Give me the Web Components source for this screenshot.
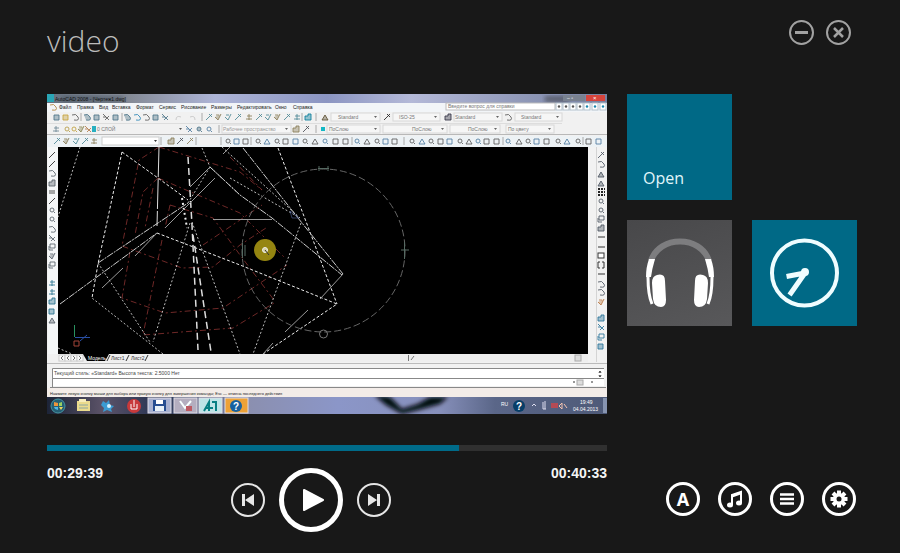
<!DOCTYPE html>
<html lang="en">
<head>
<meta charset="utf-8">
<meta name="viewport" content="width=device-width, initial-scale=1">
<title>video</title>
<style>
html, body { margin: 0; background: #181818; }
body { font-family: "Open Sans", "Noto Sans", sans-serif; color: #fff; }
</style>
</head>
<body>
<media-app></media-app>
<script>
const define = (name, html, setup) => {
  const template = document.createElement('template');
  template.innerHTML = html;
  customElements.define(name, class extends HTMLElement {
    constructor() {
      super();
      this.attachShadow({ mode: 'open' }).append(template.content.cloneNode(true));
    }
    connectedCallback() { if (setup) setup(this, this.shadowRoot); }
  });
};

/* Round outlined button; size and stroke come from custom properties. */
define('round-button', `
<style>
:host { display: block; flex: none; }
button { display: grid; place-items: center; box-sizing: border-box; margin: 0; padding: 0;
  width: var(--size, 34px); height: var(--size, 34px); border: var(--ring, 3px) solid currentColor;
  border-radius: 50%; background: none; color: inherit; font: bold 18px/18px "Noto Sans", sans-serif; cursor: pointer; }
::slotted(svg) { display: block; }
</style>
<button type="button"><slot></slot></button>`, (el, root) => {
  root.querySelector('button').setAttribute('aria-label', el.getAttribute('label'));
});

define('app-header', `
<style>
:host { display: flex; justify-content: space-between; align-items: flex-start; padding: 0 6px 0 0; }
h1 { margin: 0; font-size: 30px; line-height: 42px; font-weight: 300; color: #bcbcbc; }
div { display: flex; gap: 12px; color: #a2a2a2; --size: 25px; --ring: 2px; }
</style>
<h1>video</h1>
<div>
<round-button label="Minimize"><svg width="13" height="13"><path d="M0 6.500H13" stroke="currentColor" stroke-width="3"/></svg></round-button>
<round-button label="Close"><svg width="13" height="13"><path d="M2 2L11 11M11 2L2 11" stroke="currentColor" stroke-width="2.500"/></svg></round-button>
</div>`);

define('app-tile', `
<style>
:host { display: block; }
button { display: flex; width: 100%; height: 106px; margin: 0; border: 0; padding: 0 16px 10px; align-items: flex-end;
  background: #006986; color: #e0f6fb; font: 16px/24px "Open Sans", sans-serif; cursor: pointer; }
:host([icon]) button { padding: 0; align-items: center; justify-content: center; }
:host([tone="grey"]) button { background: linear-gradient(160deg, #48484a, #58585a); }
::slotted(svg) { display: block; }
</style>
<button type="button"><slot></slot></button>`, (el, root) => {
  if (el.hasAttribute('label')) root.querySelector('button').setAttribute('aria-label', el.getAttribute('label'));
});

/* The frame of the video: a CAD program on a desktop. */
define('video-frame', `
<style>
:host { display: block; }
svg { display: block; width: 100%; height: auto; font-family: "Liberation Sans", sans-serif; }
</style>
<svg viewBox="47 94 560 320" role="img" aria-label="Video frame"></svg>`, (el, root) => {
  const out = [];
  const rect = (x, y, w, h, f, more = '') => out.push(`<rect x="${x}" y="${y}" width="${w}" height="${h}" fill="${f}" ${more}/>`);
  const line = (d, c, w = 1, dash = '', o = 1) => out.push(`<path d="${d}" fill="none" stroke="${c}" stroke-width="${w}" stroke-dasharray="${dash}" opacity="${o}"/>`);
  const text = (x, y, t, c = '#333', size = 5, more = '') => out.push(`<text x="${x}" y="${y}" fill="${c}" font-size="${size}" ${more}>${t}</text>`);

  const shapes = [
    'M-3 -2H2V3H-3Z', 'M-3 3L3 -3M0 -3L3 0', 'M-2 0A2 2 0 1 0 2 0A2 2 0 1 0 -2 0M2 2L3 3', 'M-3 3V-1H0V-3H3V3Z',
    'M-3 -3L3 3M-1 3L3 -1M-3 0H0', 'M-3 2H3M-2 -1H3M0 -3V3', 'M-3 3L0 -2L3 3Z', 'M-2 -3H3V1H-2ZM-3 -1V3H1',
    'M-3 -2Q1 -4 3 0T-1 3', 'M-3 0L0 3L3 -3M-2 -2H1'];
  const colours = ['#4b7488', '#4a4d55', '#4f7ba0', '#8a7c58', '#5a5a5a', '#4b8794'];
  const icon = (x, y, i, c = colours[(i * 5) % 6]) =>
    out.push(`<path transform="translate(${x} ${y})" d="${shapes[i % 10]}" fill="${i % 3 ? 'none' : c}" fill-opacity=".4" stroke="${c}" stroke-opacity=".85"/>`);
  const icons = (xs, y, shift = 0) => xs.forEach((x, i) => icon(x, y, (i * 7 + i * i + shift) % 30));
  const seps = (xs, y) => xs.forEach(x => line(`M${x} ${y - 4}V${y + 4}`, '#aaa'));
  const field = (x, y, w, t, tx, c = '#777') => {
    rect(x, y - 4, w, 8, '#f6f6f6', 'stroke="#d8d8d8" stroke-width="1"');
    text(tx, y + 2, t, c);
    out.push(`<path d="M${x + w - 6} ${y - 1}h3l-1.500 2z" fill="#666"/>`);
  };

  out.push(`<defs>
    <linearGradient id="cap"><stop offset="0" stop-color="#65707e"/><stop offset=".15" stop-color="#858b97"/><stop offset=".3" stop-color="#adb4d6"/><stop offset=".5" stop-color="#8b95c2"/><stop offset=".65" stop-color="#b4b9d8"/><stop offset="1" stop-color="#7580a0"/></linearGradient>
    <linearGradient id="bar"><stop offset="0" stop-color="#1c2438"/><stop offset=".1" stop-color="#5c5368"/><stop offset=".2" stop-color="#263252"/><stop offset=".35" stop-color="#8b8fae"/><stop offset=".52" stop-color="#8b96c8"/><stop offset=".7" stop-color="#8790bb"/><stop offset=".8" stop-color="#5a6688"/><stop offset="1" stop-color="#4e5a78"/></linearGradient>
    <clipPath id="sheet"><rect x="58" y="147" width="530" height="207"/></clipPath>
    <clipPath id="strip"><rect x="47" y="397" width="560" height="17"/></clipPath>
    <filter id="soft"><feGaussianBlur stdDeviation="2"/></filter></defs>`);
  rect(47, 94, 560, 320, '#f1f1f1');
  /* caption and menu */
  rect(47, 94, 560, 9, 'url(#cap)');
  rect(62, 96, 62, 6, '#263442', 'opacity=".35" filter="url(#soft)"');
  rect(545, 96, 24, 6, '#333', 'opacity=".5" filter="url(#soft)"');
  rect(47, 94, 7, 8, '#2aa5b5');
  text(55, 101, 'AutoCAD 2008 - [Чертеж1.dwg]', '#111');
  rect(563, 95, 22, 6, '#79818f');
  rect(586, 95, 19, 6, '#d7443c');
  text(567, 100, '–  ▫', '#fff'); text(593, 100, '×', '#fff', 6);
  rect(47, 103, 560, 9, '#f2f5f8');
  icon(53, 107, 8, '#b2843b');
  [[59, 'Файл'], [77, 'Правка'], [99, 'Вид'], [112, 'Вставка'], [136, 'Формат'], [159, 'Сервис'], [181, 'Рисование'], [211, 'Размеры'], [237, 'Редактировать'], [275, 'Окно'], [293, 'Справка']]
    .forEach(([x, t]) => text(x, 109, t, '#222'));
  rect(446, 103, 109, 7, '#fff', 'stroke="#bbb"');
  text(448, 108, 'Введите вопрос для справки', '#777');
  [559, 566, 573, 580, 587, 595, 603].forEach((x, i) => { rect(x - 3, 103, 6, 7, '#fff', 'stroke="#b4c2cb" stroke-width="1"'); out.push(`<circle cx="${x}" cy="106.500" r="1.200" fill="${i > 3 ? '#1985ad' : '#555'}"/>`); });
  /* toolbars */
  icons([57, 75, 87, 97, 106, 116, 127, 146, 156, 165], 117);
  icon(66, 117, 0, '#c5a23c'); icon(137, 117, 8, '#2b86b6');
  line('M176 120Q176 115 181 117M190 117Q195 115 195 120', '#ccc');
  icons([209, 218, 228, 238, 249, 259, 268, 277, 287, 297], 117, 1);
  icon(308, 117, 3, '#087d9b'); icon(325, 117, 6, '#5d5032');
  seps([81, 122, 202, 302, 316], 117);
  field(331, 117, 49, 'Standard', 338); icon(387, 117, 1, '#222'); field(393, 117, 47, 'ISO-25', 399);
  icon(448, 117, 3, '#334'); field(454, 117, 48, 'Standard', 455); icon(508, 117, 8); field(515, 117, 47, 'Standard', 521);
  line('M47 123.500H562', '#ddd');
  icon(56, 129, 5, '#6d8794'); icon(67, 129, 2, '#b59b45'); icon(74, 129, 2, '#c0a03c'); icon(81, 129, 9, '#8a8450'); icon(88, 129, 4, '#b37b4b');
  rect(92, 126, 4, 6, '#28afc0'); text(97, 131, '0 СЛОЙ', '#777');
  out.push('<path d="M179 128h3l-1.500 2z" fill="#555"/>');
  icons([189, 199, 209], 129, 4); seps([219, 316], 129);
  field(222, 129, 69, 'Рабочее пространство', 223, '#999'); icons([296, 306], 129, 3);
  rect(321, 127, 4, 4, '#13b8c5'); field(327, 129, 53, 'ПоСлою', 329); field(383, 129, 64, 'ПоСлою', 412);
  field(450, 129, 50, 'ПоСлою', 468); field(506, 129, 48, 'По цвету', 508);
  line('M47 134.500H607', '#b8b8b8');
  rect(47, 136, 560, 11, '#edf2f5');
  icons([57, 66, 76, 85, 94], 141, 1); rect(102, 137, 57, 8, '#fff', 'stroke="#ccc"');
  out.push('<path d="M154 140h3l-1.500 2z" fill="#333"/>');
  icons([171, 180, 190], 141, 3); rect(199, 137, 20, 8, '#f2f2f2');
  icons([228, 237, 246, 258, 267, 277, 286, 296, 305, 315, 325, 336, 346, 357, 367, 377, 386, 395, 412, 422, 431, 441, 450, 460, 469, 478, 487, 497, 508, 519, 528, 537, 547, 558, 567, 578, 589, 599], 141, 2);
  seps([161, 196, 221, 251, 352, 404, 503, 583], 141);
  /* side bars */
  rect(48, 147, 10, 207, '#f5f7f8'); rect(588, 147, 19, 215, '#f2f2f2'); line('M596.500 147V362', '#d4d4d4');
  [155, 164, 173, 183, 192, 201, 210, 219, 229, 238, 247, 256, 265, 283, 292, 301, 311, 320].forEach((y, i) => {
    if (i < 2 || i === 5) line(`M49 ${y + 3}L55 ${y - 3}`, '#444');
    else if (i === 4) line(`M49 ${y - 1}h6M49 ${y + 1}h6`, '#555');
    else icon(52, y, [0, 0, 8, 3, 0, 1, 2, 2, 8, 4, 7, 9, 7, 5, 5, 3, 0, 6][i], i > 12 && i < 17 ? '#27718d' : '#576068');
  });
  [155, 164, 174, 183, 192, 201, 210, 219, 228, 237, 247, 256, 265, 274, 284, 292, 302, 318, 327, 337, 346].forEach((y, i) => {
    if ([9, 10, 13].includes(i)) line(`M598 ${y}h7`, '#333');
    else if (i === 4) line(`M598 ${y - 3}h7M598 ${y}h7M598 ${y + 3}h7`, '#222', 2, '2 1');
    else if (i === 11) rect(598, y - 3, 6, 5, '#fff', 'stroke="#333"');
    else if (i === 12) line(`M600 ${y - 3}h-2v6h2M602 ${y - 3}h2v6h-2`, '#333');
    else icon(601, y, [1, 8, 6, 6, 5, 2, 2, 7, 3, 0, 0, 0, 3, 0, 8, 8, 9, 3, 4, 7, 0][i], i > 16 ? '#287399' : i === 16 ? '#b97742' : '#4c5560');
  });
  /* drawing sheet */
  out.push('<g clip-path="url(#sheet)">');
  rect(58, 147, 530, 207, '#000');
  const red = ['M159 147L240 172L262 190', 'M159 147L139 160L122 246L182 268L213 267L240 245L266 228', 'M158 178L240 213L285 258', 'M158 178L143 192L135 235', 'M153 188L145 228', 'M162 240L143 335L233 328L274 303', 'M130 252L122 298L165 313L223 308L287 265', 'M170 205L213 218L240 255L274 300', 'M203 245L240 220L262 205', 'M230 157L262 190', 'M170 205L165 228'];
  red.forEach(d => line(d, '#933634', 1, '6 3 2 3', .75));
  ['M80 147L58 217', 'M163 354L92 298', 'M98 263L150 342', 'M188 203L210 167L240 195', 'M202 148L210 167', 'M190 223L153 342', 'M192 222L240 354', 'M222 147L300 218', 'M230 178L300 218', 'M301 223L253 354', 'M58 348L72 354'].forEach(d => line(d, '#bbb', 1, '2 2'));
  ['M122 152L98 264L92 298', 'M122 152L158 178L188 200', 'M157 233L240 265L337 304L263 354', 'M278 148L310 232L337 304'].forEach(d => line(d, '#eee', 1, '3 2'));
  ['M60 304L157 233', 'M98 263L188 203', 'M243 148L298 218L343 274', 'M210 167L240 195L272 218L342 275'].forEach(d => line(d, '#ccc', 1, '7 1 2 1'));
  line('M188 157L192 225L198 350M193 235L211 352', '#ddd', 1.5, '7 4'); line('M182 198L187 228', '#eee', 2, '2 3');
  line('M159 147L157 226', '#ddd', 1, '30 2');
  line('M102 288L123 268M135 256L157 233M165 228L215 178M190 187L210 167M223 154L230 147M343 274L320 299M308 310L285 332M213 219.500H272M263 354L273 343', '#999');
  out.push('<circle cx="323.500" cy="250.500" r="81.500" fill="none" stroke="#666" stroke-dasharray="7 3"/>');
  line('M318 168.500h11M319 166v5M328 166v5M242.500 243v15M245 245v11M404.500 242v17M401 250h8', '#566a62');
  out.push('<circle cx="323.500" cy="334" r="4" fill="none" stroke="#777"/>');
  out.push('<circle cx="265" cy="250" r="11" fill="#958511"/><circle cx="265" cy="250" r="2.500" fill="#d8d2a2" stroke="#eee"/>');
  line('M265 250l4 5', '#333');
  line('M290 211l9 7h-7z', '#50629b', 1, '', .6); line('M74.500 337V325', '#29915f'); line('M75 337.500H90M80 341l7-6', '#294fa5'); line('M74 341h5v5h-5z', '#a34438');
  out.push('</g>');
  /* layout tabs and command line */
  rect(58, 354, 530, 8, '#eee');
  [62, 68, 74, 80].forEach((x, i) => { rect(x - 3, 355, 6, 6, '#fafafa', 'stroke="#ccc"'); line(i < 2 ? `M${x + 1} 356l-2 2l2 2` : `M${x - 1} 356l2 2l-2 2`, '#777'); });
  out.push('<path d="M83 354H109L105 361H87Z" fill="#000"/>');
  text(88, 360, 'Модель', '#fff'); text(111, 360, 'Лист1'); text(131, 360, 'Лист2'); line('M107 361l3-6M126 361l3-6M145 361l3-6', '#333');
  line('M408.500 355v6M411 360l3-4', '#777'); rect(575, 355, 6, 6, '#ddd', 'stroke="#aaa"');
  line('M47 363.500H607', '#bbb');
  rect(53, 369, 551, 9, '#fff'); rect(53, 379, 551, 7, '#fff'); line('M52.500 387V368.500H604M53 378.500H604M50 387.500H606', '#888');
  text(54, 375, 'Текущий стиль: «Standard» Высота текста: 2.5000 Нет', '#444', 5);
  line('M599 373l1-2l1 2M599 375l1 2l1-2M573 382h2M591 382h2', '#333'); rect(577, 380, 6, 5, '#ddd', 'stroke="#aaa"');
  rect(47, 388, 560, 9, '#f3ece8');
  text(50, 395, 'Нажмите левую кнопку мыши для выбора или правую кнопку для завершения команды; Esc — отмена последнего действия', '#222', 4);
  /* taskbar */
  rect(47, 397, 560, 17, 'url(#bar)');
  out.push('<g clip-path="url(#strip)"><path filter="url(#soft)" d="M374 395L390 397L402 409L418 404L430 397L448 397L440 404L418 410L402 414L386 405Z" fill="#04070c"/></g>');
  out.push('<circle cx="58" cy="406" r="7" fill="#245f75" stroke="#4793a0"/><path d="M54 402l4 1v3h-4z" fill="#ed943c"/><path d="M59 403l3-1v4h-3z" fill="#9bd062"/><path d="M54 407h4v3l-3-1z" fill="#50b8e8"/><path d="M59 407h4l-2 3z" fill="#eed65c"/>');
  rect(77, 401, 13, 10, '#eadb8d'); rect(79, 399, 7, 3, '#f7edbc'); line('M79 405H88M79 408H88', '#8ca6a0');
  out.push('<path d="M103 401l3 2 3-3 1 5 4 1-3 3 1 3-5-2-4 2 1-4-3-3z" fill="#3b9bd2"/><circle cx="109" cy="406" r="2" fill="#d7f3ff"/><circle cx="134" cy="406" r="7" fill="#c8393b"/><path d="M134 400v7m-3-3v5h6v-5" fill="none" stroke="#fff"/>');
  [[148, '#a8b1d0'], [174, '#b4aebf'], [199, '#bfe4e7'], [225, '#eda237']].forEach(([x, c]) => rect(x, 398, 23, 15, c, 'stroke="#dfdce5"'));
  rect(153, 400, 13, 11, '#274e91'); rect(156, 400, 7, 4, '#fff'); rect(155, 406, 9, 5, '#e8f1f8');
  line('M180 401l5 7 6-7', '#f8ffff', 2); rect(186, 406, 6, 5, '#bd5a62');
  line('M204 411L209 402V411M205 408H213M212 402H216V411', '#087f83', 2);
  out.push('<circle cx="236" cy="406" r="6" fill="#1761a0"/><circle cx="519" cy="406" r="6" fill="#073e68"/>');
  text(233, 410, '?', '#fff', 10, 'font-weight="bold"'); text(516, 410, '?', '#fff', 10, 'font-weight="bold"');
  text(501, 406, 'RU', '#fff'); line('M532 406l2-2 2 2M543 402v7h3M545 401v8', '#dde');
  rect(551, 403, 7, 5, '#b34b55'); line('M559 406l3-3v6l-3-3M564 404l3 4', '#f5c3b0');
  text(580, 404, '19:49', '#fff'); text(573, 411, '04.04.2013', '#fff'); rect(603, 398, 4, 15, '#8794b0');
  root.querySelector('svg').innerHTML = out.join('');
});

define('video-player', `
<style>
:host { display: block; }
input { display: block; appearance: none; width: 100%; height: 6px; margin: 31px 0 15px; border: 0; padding: 0; cursor: pointer;
  background: linear-gradient(90deg, #006b89 73.6%, #303030 73.6%); }
input::-webkit-slider-thumb { appearance: none; width: 6px; height: 6px; background: transparent; }
input::-moz-range-thumb { width: 6px; height: 6px; border: 0; background: transparent; }
div { display: grid; grid-template-columns: auto 4fr auto 5fr auto; }
time { font: bold 14px/14px "Liberation Sans", sans-serif; color: #f4f4f4; }
time:last-child { grid-column: 5; }
nav { grid-column: 3; display: flex; align-items: center; gap: 14px; margin-top: 2px; color: #e6e6e6; --ring: 2px; }
round-button.play { --size: 64px; --ring: 5px; color: #fff; }
</style>
<video-frame></video-frame>
<input type="range" min="0" max="2433" value="1779" aria-label="Position">
<div>
<time>00:29:39</time>
<nav aria-label="Playback">
<round-button label="Previous"><svg width="14" height="14"><path d="M1 1H4V13H1ZM13 1V13L4 7Z" fill="currentColor"/></svg></round-button>
<round-button class="play" label="Play"><svg width="28" height="28"><path d="M7 4L26 14L7 24Z" fill="currentColor" stroke="currentColor" stroke-width="2" stroke-linejoin="round"/></svg></round-button>
<round-button label="Next"><svg width="14" height="14"><path d="M10 1H13V13H10ZM1 1V13L10 7Z" fill="currentColor"/></svg></round-button>
</nav>
<time>00:40:33</time>
</div>`);

define('side-panel', `
<style>
:host { display: flex; flex-direction: column; justify-content: space-between; }
section { display: grid; grid-template-columns: 1fr 1fr; gap: 20px; }
app-tile:first-child { grid-column: 1; }
app-tile:nth-child(2) { grid-column: 1; }
nav { display: flex; justify-content: flex-end; gap: 18px; padding: 0 1px 16px 0; }
</style>
<section>
<app-tile>Open</app-tile>
<app-tile icon tone="grey" label="Audio"><svg width="72" height="76" viewBox="0 0 72 76">
<path d="M7 26C15 0 57 0 65 26" fill="none" stroke="#7d7d7f" stroke-width="6"/>
<path d="M5 24H11Q8 34 7 42H2Q2 32 5 24ZM67 24H61Q64 34 65 42H70Q70 32 67 24Z" fill="#fff"/>
<path d="M4 42Q4 60 8 69M68 42Q68 60 64 69" fill="none" stroke="#fff" stroke-width="3"/>
<path d="M13 40Q21 38 21 46L22 65Q22 72 17 72Q10 72 9 64L8 48Q8 41 13 40ZM59 40Q51 38 51 46L50 65Q50 72 55 72Q62 72 63 64L64 48Q64 41 59 40Z" fill="#fff"/></svg></app-tile>
<app-tile icon label="History"><svg width="72" height="72" viewBox="0 0 72 72" fill="none" stroke="#effdff">
<circle cx="35.500" cy="36" r="32.500" stroke-width="4"/>
<path d="M36 36L20 39M36 36L22 56" stroke-width="5" stroke-linecap="square"/><circle cx="36" cy="35" r="2" stroke-width="4"/></svg></app-tile>
</section>
<nav aria-label="Tools">
<round-button label="Subtitles">A</round-button>
<round-button label="Music"><svg width="18" height="20" viewBox="0 0 18 20"><path d="M6 16V6L15 3V14" fill="none" stroke="#fff" stroke-width="2"/><path d="M5 6L16 2V5L5 9Z" fill="#fff"/><ellipse cx="4" cy="16" rx="3" ry="2.500" fill="#fff"/><ellipse cx="13" cy="14" rx="3" ry="2.500" fill="#fff"/></svg></round-button>
<round-button label="Playlist"><svg width="16" height="14"><path d="M1 2.500H15M1 7H15M1 11.500H15" stroke="#fff" stroke-width="2.600"/></svg></round-button>
<round-button label="Settings"><svg width="18" height="18" viewBox="-9 -9 18 18"><path d="M0 -8.500V8.500M-8.500 0H8.500M-6 -6L6 6M6 -6L-6 6" stroke="#fff" stroke-width="4"/><circle r="6" fill="#fff"/><circle r="2.500" fill="#181818"/></svg></round-button>
</nav>`);

define('media-app', `
<style>
:host { display: block; padding: 20px 43px 20px 47px; }
main { display: grid; grid-template-columns: minmax(0, 1fr) 230px; gap: 20px; margin-top: 32px; }
</style>
<app-header></app-header>
<main><video-player></video-player><side-panel></side-panel></main>`);
</script>
</body>
</html>
